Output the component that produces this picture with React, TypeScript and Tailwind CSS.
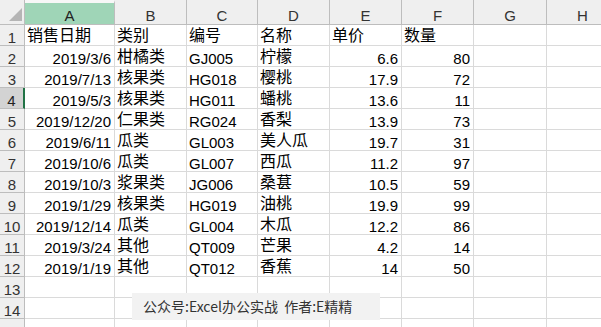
import React from "react";

const cols = ["A", "B", "C", "D", "E", "F", "G", "H"];

// date, category, code, name, price, qty
const rows: (string | number)[][] = [
  ["销售日期", "类别", "编号", "名称", "单价", "数量"],
  ["2019/3/6", "柑橘类", "GJ005", "柠檬", 6.6, 80],
  ["2019/7/13", "核果类", "HG018", "樱桃", 17.9, 72],
  ["2019/5/3", "核果类", "HG011", "蟠桃", 13.6, 11],
  ["2019/12/20", "仁果类", "RG024", "香梨", 13.9, 73],
  ["2019/6/11", "瓜类", "GL003", "美人瓜", 19.7, 31],
  ["2019/10/6", "瓜类", "GL007", "西瓜", 11.2, 97],
  ["2019/10/3", "浆果类", "JG006", "桑葚", 10.5, 59],
  ["2019/1/29", "核果类", "HG019", "油桃", 19.9, 99],
  ["2019/12/14", "瓜类", "GL004", "木瓜", 12.2, 86],
  ["2019/3/24", "其他", "QT009", "芒果", 4.2, 14],
  ["2019/1/19", "其他", "QT012", "香蕉", 14, 50],
];

const font = "font-['Liberation_Sans','Noto_Sans_CJK_SC',sans-serif]";

function Cell({ value, index }: { value?: string | number; index: number }) {
  if (value === undefined) {
    return <div className="border-r border-b border-[#dadada]" />;
  }
  const right = typeof value === "number" || (index === 0 && /^\d/.test(String(value)));
  const cjk = /[\u4e00-\u9fff]/.test(String(value));
  return (
    <div
      className={
        "flex items-end overflow-visible whitespace-nowrap border-r border-b border-[#dadada] text-black " +
        (right ? "justify-end pr-[3px] " : "justify-start pl-[2px] ") +
        (cjk ? "text-[16px] leading-[16px] pb-[1px]" : "text-[15px] leading-[15px]")
      }
    >
      {value}
    </div>
  );
}

export default function App() {
  return (
    <div className={"relative w-[601px] h-[327px] overflow-hidden bg-white " + font}>
      <div className="grid grid-cols-[25px_90px_72px_71px_72px_72px_72px_73px_72px] grid-rows-[25px_repeat(15,21px)] w-[619px]">
        {/* corner */}
        <div className="relative bg-[#efefef] border-r border-b border-[#bdbdbd]">
          <svg className="absolute inset-0" width="25" height="25" viewBox="0 0 25 25">
            <polygon points="22,8 22,21 9,21" fill="#b5b5b5" />
          </svg>
        </div>
        {cols.map((c) => (
          <div
            key={c}
            className={
              "flex items-end justify-center pb-[1px] text-[15px] leading-[15px] border-r border-b border-[#bdbdbd] " +
              (c === "A"
                ? "bg-[#9fd5b7] border-t-[3px] border-t-[#f7f7f7] text-[#222]"
                : "bg-[#efefef] text-[#333]")
            }
          >
            {c}
          </div>
        ))}

        {Array.from({ length: 15 }, (_, r) => {
          const data = rows[r];
          return (
            <React.Fragment key={r}>
              <div
                className={
                  "flex items-end justify-center text-[15px] leading-[15px] border-b border-[#bdbdbd] " +
                  (r === 3
                    ? "bg-[#d3d3d3] border-r-2 border-r-[#217346] text-[#222]"
                    : "bg-[#efefef] border-r border-r-[#bdbdbd] text-[#333]")
                }
              >
                {r + 1}
              </div>
              {cols.map((c, i) => (
                <Cell key={c} value={data ? data[i] : undefined} index={i} />
              ))}
            </React.Fragment>
          );
        })}
      </div>

      {/* watermark */}
      <div className="absolute left-[132px] top-[293px] w-[248px] h-[27px] bg-[#f2f2f2] flex items-center pl-[11px] text-[14px] text-[#333] whitespace-nowrap font-['Noto_Sans_CJK_SC','Liberation_Sans',sans-serif]">
        公众号:Excel办公实战&nbsp;&nbsp;作者:E精精
      </div>
    </div>
  );
}
